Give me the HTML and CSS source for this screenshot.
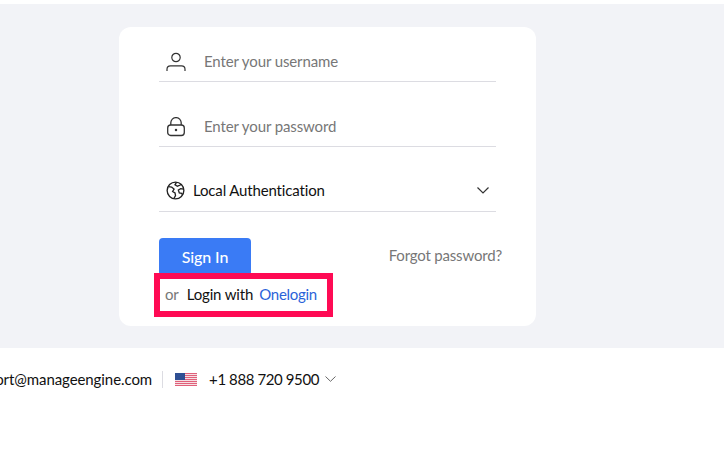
FILE: index.html
```html
<!DOCTYPE html>
<html lang="en">
<head>
<meta charset="utf-8">
<title>Sign in</title>
<link rel="stylesheet" href="styles.css">
</head>
<body>
<main class="panel">
  <form class="card">
    <div class="field">
      <svg class="icon" viewBox="0 0 20 20" width="20" height="20" fill="none" stroke="#333" stroke-width="1.200"><circle cx="10" cy="5.500" r="4.200"/><path d="M1 19v-1.800c0-2.100 1.500-3.400 3.500-3.400h11c2 0 3.500 1.300 3.500 3.400V19"/></svg>
      <span class="placeholder">Enter your username</span>
    </div>
    <div class="field">
      <svg class="icon" viewBox="0 0 20 20" width="20" height="20" fill="none" stroke="#333" stroke-width="1.300"><rect x="1.700" y="8" width="16.600" height="10.500" rx="3"/><path d="M4.800 8V5.800a5.200 5.200 0 0 1 10.400 0V8"/><circle cx="10" cy="13" r=".6" fill="#333"/></svg>
      <span class="placeholder">Enter your password</span>
    </div>
    <div class="field select">
      <svg class="globe" viewBox="0 0 20 20" width="19" height="19" fill="none" stroke="#222" stroke-width="1.400"><circle cx="10" cy="10" r="8.800"/><path d="M2.500 6l3.500.5 2.500 2-1.500 2.500 2.500 1.500.5 3-1.500 2.500M11 1.500l-1.500 2.500 2.500 1.500 2.500-1 1.500-1M18.500 8.500l-3-.5-2.500 1.500 1 3 2.500.5 1 1.500"/></svg>
      <span class="select-label">Local Authentication</span>
      <svg class="chev" viewBox="0 0 12 7" width="12" height="7" fill="none" stroke="#333" stroke-width="1.200"><path d="M.5.500L6 6 11.500.500"/></svg>
    </div>
    <div class="actions">
      <button class="signin" type="button">Sign In</button>
      <a class="forgot">Forgot password?</a>
    </div>
    <div class="alt">
      <span class="or">or</span>
      <span class="login">Login with</span>
      <a class="onelogin">Onelogin</a>
    </div>
  </form>
</main>
<footer class="footer">
  <span class="mail">support@manageengine.com</span>
  <span class="divider"></span>
  <svg class="flag" viewBox="0 0 22 13" width="22" height="13">
    <rect width="22" height="13" fill="#f6dfe3"/>
    <path d="M0 .5h22M0 2.500h22M0 4.500h22M0 6.500h22M0 8.500h22M0 10.500h22M0 12.500h22" stroke="#e0607a" stroke-width="1"/>
    <rect width="10" height="7" fill="#2f4f93"/>
  </svg>
  <span class="phone">+1 888 720 9500</span>
  <svg class="phone-chev" viewBox="0 0 11 6" width="11" height="6" fill="none" stroke="#666" stroke-width="1"><path d="M.5.500L5.500 5.300 10.500.500"/></svg>
</footer>
</body>
</html>
```
FILE: styles.css
```css
html, body { margin: 0; padding: 0; background: #fff; }
body { font-family: Lato, "Liberation Sans", sans-serif; font-size: 15px; color: #111; overflow: hidden; }
.panel { margin-top: 4px; height: 344px; box-sizing: border-box; padding: 23px 0 0 119px; background: #f2f3f7; }
.card { width: 417px; height: 299px; box-sizing: border-box; padding: 9px 40px 0; background: #fff; border-radius: 12px; display: flex; flex-direction: column; }
.field { height: 46px; box-sizing: border-box; border-bottom: 1px solid #dcdce2; display: flex; align-items: center; padding: 4px 0 0 7px; }
.field + .field { margin-top: 19px; }
.icon { margin: 2px 18px 0 0; flex: none; }
.placeholder { color: #777; letter-spacing: -0.12px; }
.select { padding-left: 7px; }
.globe { margin-right: 8px; flex: none; }
.select-label { flex: 1; color: #111; letter-spacing: -0.15px; margin-bottom: 2px; }
.chev { margin-right: 7px; flex: none; }
.actions { margin-top: 26px; display: flex; justify-content: space-between; align-items: flex-start; width: 343px; }
.signin { width: 92px; height: 38px; border: 0; border-radius: 4px; background: #3a7bf5; color: #fff; font: 500 16px Lato, "Liberation Sans", sans-serif; padding: 0 0 2px; letter-spacing: -0.1px; }
.forgot { color: #777; margin-top: 8px; letter-spacing: -0.18px; }
.alt { position: relative; height: 32px; margin-top: 2px; display: flex; align-items: center; padding-left: 6px; width: 157px; letter-spacing: -0.15px; }
.alt::after { content: ""; position: absolute; left: -5px; right: -11px; top: -5px; bottom: -7px; border: 6px solid #ff0a54; }
.or { color: #777; margin-right: 8px; }
.login { margin-right: 6px; }
.onelogin { color: #2b63d9; letter-spacing: -0.28px; }
.footer { width: 337px; margin-top: 20px; height: 22px; display: flex; justify-content: flex-end; align-items: center; white-space: nowrap; color: #111; overflow: hidden; }
.mail { flex: none; letter-spacing: -0.08px; }
.divider { width: 1px; height: 17px; background: #dcdce2; margin: 0 12px 0 10px; flex: none; }
.flag { margin-right: 12px; flex: none; }
.phone { flex: none; margin-right: 6px; letter-spacing: -0.4px; }
.phone-chev { flex: none; margin-right: 1px; }
```
